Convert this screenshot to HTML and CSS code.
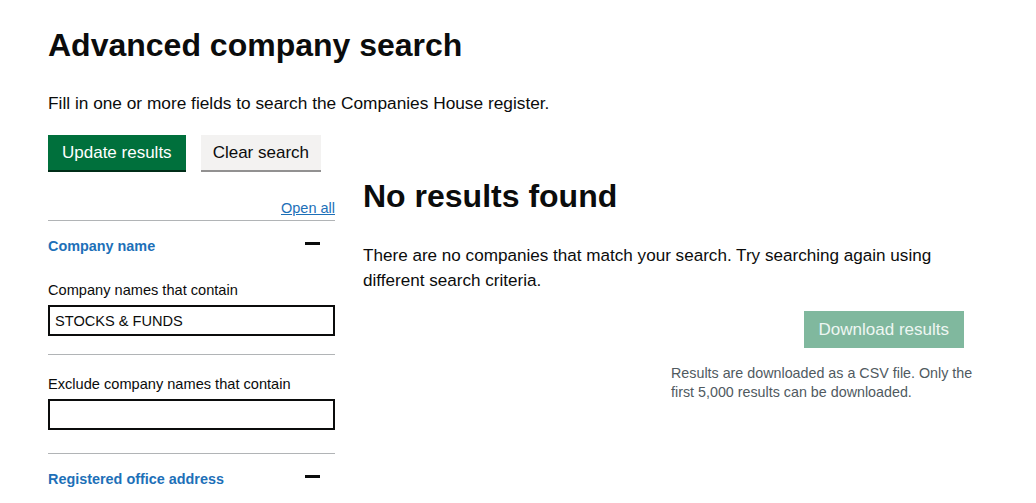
FILE: index.html
```html
<!DOCTYPE html>
<html lang="en">

<head>
    <meta charset="UTF-8">
    <meta name="viewport" content="width=device-width, initial-scale=1">
    <title>Advanced company search</title>
    <link rel="stylesheet" href="styles.css">
</head>

<body>
    <main class="page">
        <h1 class="page-title">Advanced company search</h1>
        <p class="lead">Fill in one or more fields to search the Companies House register.</p>

        <div class="layout">
            <form class="filters">
                <div class="actions">
                    <button type="button" class="btn btn-primary">Update results</button>
                    <button type="button" class="btn btn-secondary">Clear search</button>
                </div>

                <div class="accordion-controls">
                    <a href="#" class="open-all">Open all</a>
                </div>

                <div class="accordion">
                    <div class="accordion-header">
                        <span class="accordion-title">Company name</span>
                        <span class="minus"></span>
                    </div>
                    <div class="field">
                        <label for="name-include">Company names that contain</label>
                        <input type="text" id="name-include" value="STOCKS &amp; FUNDS">
                    </div>
                    <div class="field">
                        <label for="name-exclude">Exclude company names that contain</label>
                        <input type="text" id="name-exclude">
                    </div>
                </div>

                <div class="accordion">
                    <div class="accordion-header">
                        <span class="accordion-title">Registered office address</span>
                        <span class="minus"></span>
                    </div>
                </div>
            </form>

            <section class="results">
                <h2 class="results-title">No results found</h2>
                <p class="results-text">There are no companies that match your search. Try searching again using different search criteria.</p>

                <div class="download">
                    <button type="button" class="btn btn-download" disabled>Download results</button>
                    <p class="hint">Results are downloaded as a CSV file. Only the first 5,000 results can be downloaded.</p>
                </div>
            </section>
        </div>
    </main>
</body>

</html>
```

FILE: styles.css
```css
/* GOV.UK-ish styles */
:root {
    --text: #0b0c0c;
    --secondary-text: #505a5f;
    --link: #1d70b8;
    --green: #00703c;
    --border: #b1b4b6;
    --grey-btn: #f3f2f1;
}

* {
    margin: 0;
    padding: 0;
    box-sizing: border-box;
}

body {
    font-family: "Liberation Sans", Arial, sans-serif;
    color: var(--text);
    background: #ffffff;
}

.page {
    padding: 26px 48px 0;
}

.page-title {
    font-size: 32px;
    font-weight: 700;
    line-height: 38px;
}

.lead {
    margin-top: 27px;
    font-size: 17.3px;
    line-height: 24px;
}

.layout {
    display: flex;
    gap: 28px;
    margin-top: 20px;
}

/* Left filter column */
.filters {
    width: 287px;
    flex-shrink: 0;
}

.actions {
    display: flex;
    gap: 15px;
}

.btn {
    font-family: inherit;
    font-size: 17px;
    line-height: 20px;
    border: none;
    border-radius: 0;
    padding: 8px 14px 7px;
    cursor: pointer;
}

.btn-primary {
    background: var(--green);
    color: #ffffff;
    box-shadow: 0 2px 0 #002d18;
}

.btn-secondary {
    padding-left: 12px;
    padding-right: 12px;
    background: var(--grey-btn);
    color: var(--text);
    box-shadow: 0 2px 0 #929191;
}

.accordion-controls {
    display: flex;
    justify-content: flex-end;
    margin-top: 29px;
    padding-bottom: 3px;
}

.open-all {
    font-size: 14.5px;
    line-height: 18px;
    color: var(--link);
}

.accordion {
    border-top: 1px solid var(--border);
}

.accordion-header {
    display: flex;
    justify-content: space-between;
    align-items: center;
    padding: 15px 15px 0 0;
    height: 34px;
}

.accordion-title {
    font-size: 14.4px;
    font-weight: 700;
    color: var(--link);
}

.minus {
    width: 15px;
    height: 3px;
    background: var(--text);
    margin-top: -5px;
}

.field {
    padding: 26px 0 18px;
}

.field + .field {
    border-top: 1px solid var(--border);
    padding-top: 20px;
    padding-bottom: 23px;
}

.field label {
    display: block;
    font-size: 14.6px;
    line-height: 18px;
    margin-bottom: 6px;
}

.field input {
    width: 100%;
    height: 31px;
    border: 2px solid var(--text);
    padding: 0 5px;
    font-family: inherit;
    font-size: 14.6px;
    color: var(--text);
}

/* Results column */
.results {
    flex: 1;
    padding-top: 42px;
}

.results-title {
    font-size: 32px;
    font-weight: 700;
    line-height: 38px;
}

.results-text {
    margin-top: 28px;
    font-size: 17.1px;
    line-height: 25px;
}

.download {
    width: 305px;
    margin: 18px 12px 0 auto;
}

.btn-download {
    display: block;
    margin: 0 12px 0 auto;
    padding: 9px 15px 8px;
    background: #80b89e;
    color: #eef6f2;
    box-shadow: none;
    cursor: default;
}

.hint {
    margin-top: 16px;
    font-size: 14.3px;
    line-height: 19px;
    color: var(--secondary-text);
}
```
